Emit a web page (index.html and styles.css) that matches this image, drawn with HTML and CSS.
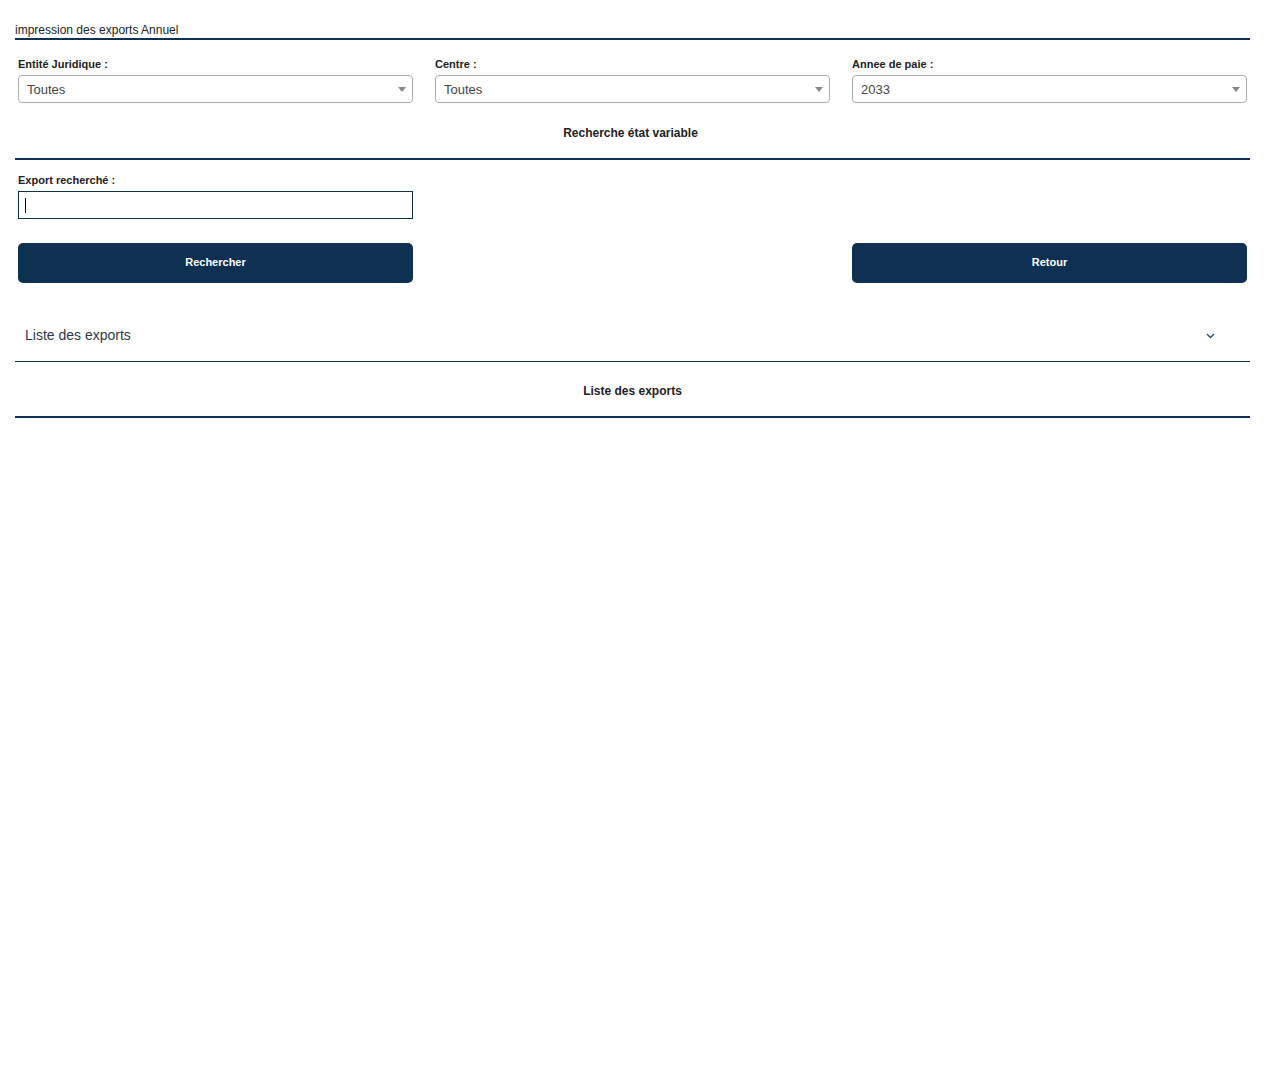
FILE: index.html
```html
<!DOCTYPE html>
<html lang="fr">
    <head>
        <meta charset="UTF-8">
        <meta name="viewport" content="width=device-width, initial-scale=1.0">
        <title>impression des exports Annuel</title>
        <link rel="stylesheet" href="styles.css">
    </head>
    <body>
        <div class="page">
            <h1 class="page-title">impression des exports Annuel</h1>

            <div class="form-row">
                <div class="form-group">
                    <label for="entite">Entité Juridique :</label>
                    <div class="select-box" id="entite">
                        <span>Toutes</span>
                        <span class="select-arrow"></span>
                    </div>
                </div>
                <div class="form-group">
                    <label for="centre">Centre :</label>
                    <div class="select-box" id="centre">
                        <span>Toutes</span>
                        <span class="select-arrow"></span>
                    </div>
                </div>
                <div class="form-group">
                    <label for="annee">Annee de paie :</label>
                    <div class="select-box" id="annee">
                        <span>2033</span>
                        <span class="select-arrow"></span>
                    </div>
                </div>
            </div>

            <h2 class="section-title search-title">Recherche état variable</h2>

            <div class="form-row search-row">
                <div class="form-group">
                    <label for="export">Export recherché :</label>
                    <div class="text-input" id="export"><span class="caret"></span></div>
                </div>
            </div>

            <div class="form-row button-row">
                <button type="button" class="btn">Rechercher</button>
                <div></div>
                <button type="button" class="btn">Retour</button>
            </div>

            <div class="accordion-header">
                <span>Liste des exports</span>
                <svg class="chevron" width="9" height="6" viewBox="0 0 9 6">
                    <polyline points="1,1 4.5,4.5 8,1" fill="none" stroke="#1f4e8c" stroke-width="1.4"/>
                </svg>
            </div>

            <h2 class="section-title list-title">Liste des exports</h2>
        </div>
    </body>
</html>
```

FILE: styles.css
```css
body {
    font-family: "Liberation Sans", Arial, sans-serif;
    margin: 0;
    color: #333;
    background-color: #fff;
}

.page {
    margin: 0 30px 0 15px;
    padding-top: 23px;
}

.page-title {
    font-size: 12px;
    font-weight: normal;
    color: #222;
    margin: 0;
    line-height: 14px;
    padding-bottom: 1px;
    border-bottom: 2px solid #0e3153;
}

.form-row {
    display: grid;
    grid-template-columns: 395px 395px 395px;
    column-gap: 22px;
    padding: 0 3px;
}

.form-group {
    padding-top: 17px;
}

label {
    display: block;
    font-size: 11px;
    font-weight: bold;
    color: #222;
    line-height: 14px;
    margin-bottom: 4px;
}

.select-box {
    height: 28px;
    box-sizing: border-box;
    border: 1px solid #aaa;
    border-radius: 4px;
    padding: 0 8px;
    display: flex;
    align-items: center;
    justify-content: space-between;
    font-size: 13px;
    color: #444;
}

.select-arrow {
    width: 0;
    height: 0;
    border-left: 4px solid transparent;
    border-right: 4px solid transparent;
    border-top: 5px solid #888;
    margin-right: -2px;
}

.section-title {
    font-size: 12px;
    font-weight: bold;
    text-align: center;
    color: #222;
    margin: 0;
    padding: 23px 0 18px;
    line-height: 14px;
    border-bottom: 2px solid #0e3153;
}

.search-title {
    padding-right: 4px;
}

.search-row .form-group {
    padding-top: 13px;
}

.text-input {
    height: 28px;
    box-sizing: border-box;
    border: 1px solid #0e3153;
    display: flex;
    align-items: center;
    padding-left: 6px;
}

.caret {
    width: 1px;
    height: 15px;
    background-color: #000;
}

.button-row {
    margin-top: 24px;
}

.btn {
    height: 40px;
    padding: 0 0 2px;
    background-color: #0e3153;
    color: #fff;
    font-family: "Liberation Sans", Arial, sans-serif;
    font-size: 11px;
    font-weight: bold;
    border: none;
    border-radius: 5px;
    cursor: pointer;
}

.accordion-header {
    margin-top: 33px;
    height: 46px;
    display: flex;
    align-items: center;
    justify-content: space-between;
    padding: 0 35px 8px 10px;
    font-size: 14px;
    color: #2b3a4a;
    border-bottom: 1px solid #0e3153;
    box-sizing: border-box;
}

.chevron {
    margin-top: 3px;
}

.list-title {
    padding: 22px 0 18px;
}
```
